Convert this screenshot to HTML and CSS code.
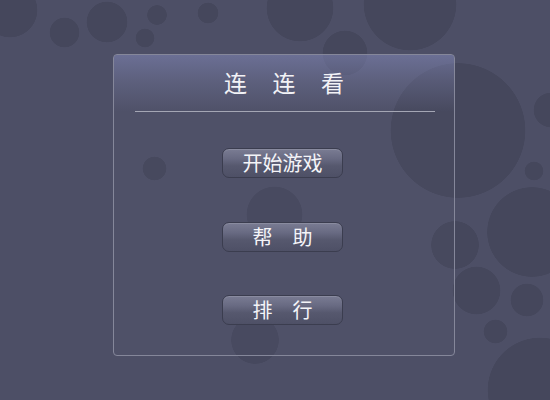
FILE: index.html
```html
<!DOCTYPE html>
<html lang="zh">
<head>
<meta charset="utf-8">
<title>连连看</title>
<link rel="stylesheet" href="styles.css">
</head>
<body>
<div class="stage">
  <div class="panel">
    <div class="header">
      <h1 class="title">连连看</h1>
      <div class="divider"></div>
    </div>
    <div class="menu">
      <button class="btn">开始游戏</button>
      <button class="btn">帮　助</button>
      <button class="btn">排　行</button>
    </div>
  </div>
</div>
</body>
</html>
```

FILE: styles.css
```css
html, body {
  margin: 0;
  padding: 0;
}
body {
  width: 550px;
  height: 400px;
  overflow: hidden;
  background: #4d4f66;
  font-family: "Noto Sans CJK SC", "Noto Sans", sans-serif;
}
.stage {
  width: 550px;
  height: 400px;
  box-sizing: border-box;
  padding: 54px 0 0 113px;
  background-color: #4d4f66;
  background-image:
    radial-gradient(circle at 10px 10px, #45475c 27px, transparent 27.6px),
    radial-gradient(circle at 64.5px 32.5px, #45475c 14.5px, transparent 15.1px),
    radial-gradient(circle at 107px 22px, #45475c 20px, transparent 20.6px),
    radial-gradient(circle at 157px 15px, #45475c 9.5px, transparent 10.1px),
    radial-gradient(circle at 145px 38px, #45475c 9px, transparent 9.6px),
    radial-gradient(circle at 208px 13px, #45475c 10px, transparent 10.6px),
    radial-gradient(circle at 154.5px 168.5px, #45475c 11.5px, transparent 12.1px),
    radial-gradient(circle at 274.5px 214.5px, #46485e 27.5px, transparent 28.1px),
    radial-gradient(circle at 255px 340px, #46485e 23.5px, transparent 24.1px),
    radial-gradient(circle at 300px 8px, #45475c 33px, transparent 33.6px),
    radial-gradient(circle at 345px 53px, #45475c 22px, transparent 22.6px),
    radial-gradient(circle at 410px 4px, #45475c 46px, transparent 46.6px),
    radial-gradient(circle at 458px 130.5px, #45475c 67px, transparent 67.6px),
    radial-gradient(circle at 551px 110px, #45475c 17px, transparent 17.6px),
    radial-gradient(circle at 534px 171px, #45475c 9px, transparent 9.6px),
    radial-gradient(circle at 532px 232px, #45475c 44.5px, transparent 45.1px),
    radial-gradient(circle at 455px 245px, #45475c 23.5px, transparent 24.1px),
    radial-gradient(circle at 476.5px 290.5px, #45475c 23.5px, transparent 24.1px),
    radial-gradient(circle at 527px 300px, #45475c 16px, transparent 16.6px),
    radial-gradient(circle at 495.5px 331.5px, #45475c 11.5px, transparent 12.1px),
    radial-gradient(circle at 540px 390px, #45475c 52px, transparent 52.6px);
}
.panel {
  width: 342px;
  height: 302px;
  box-sizing: border-box;
  border: 1px solid #85879a;
  border-radius: 4px;
  background: rgba(255, 255, 255, 0.015);
  display: flex;
  flex-direction: column;
  align-items: center;
}
.header {
  align-self: stretch;
  box-sizing: border-box;
  height: 57px;
  padding-top: 12px;
  border-radius: 3px 3px 0 0;
  background: linear-gradient(to bottom, rgba(130, 136, 185, 0.55) 0%, rgba(120, 124, 165, 0.35) 45%, rgba(110, 112, 150, 0) 100%);
  display: flex;
  flex-direction: column;
  align-items: center;
}
.title {
  margin: 0;
  font-size: 23px;
  font-weight: 400;
  line-height: 30px;
  height: 30px;
  color: #f2f2f6;
  letter-spacing: 25.5px;
  padding-left: 25.5px;
}
.divider {
  margin-top: 14px;
  width: 300px;
  height: 1px;
  background: #a4a6b4;
  margin-left: 2px;
}
.menu {
  margin-top: 36px;
  margin-right: 3px;
  display: flex;
  flex-direction: column;
  align-items: center;
  gap: 43.5px;
}
.btn {
  width: 121px;
  height: 30px;
  box-sizing: border-box;
  margin: 0;
  padding: 0;
  border: 1px solid #3b3d4f;
  border-radius: 7px;
  background: linear-gradient(to bottom, #7a7c93 0%, #686a82 35%, #56586e 60%, #4e5066 100%);
  box-shadow: inset 0 1px 0 rgba(255, 255, 255, 0.12);
  color: #f4f4f8;
  font-family: "Noto Sans CJK SC", "Noto Sans", sans-serif;
  font-size: 20px;
  line-height: 28px;
  font-weight: 400;
  text-align: center;
  cursor: pointer;
}
```
